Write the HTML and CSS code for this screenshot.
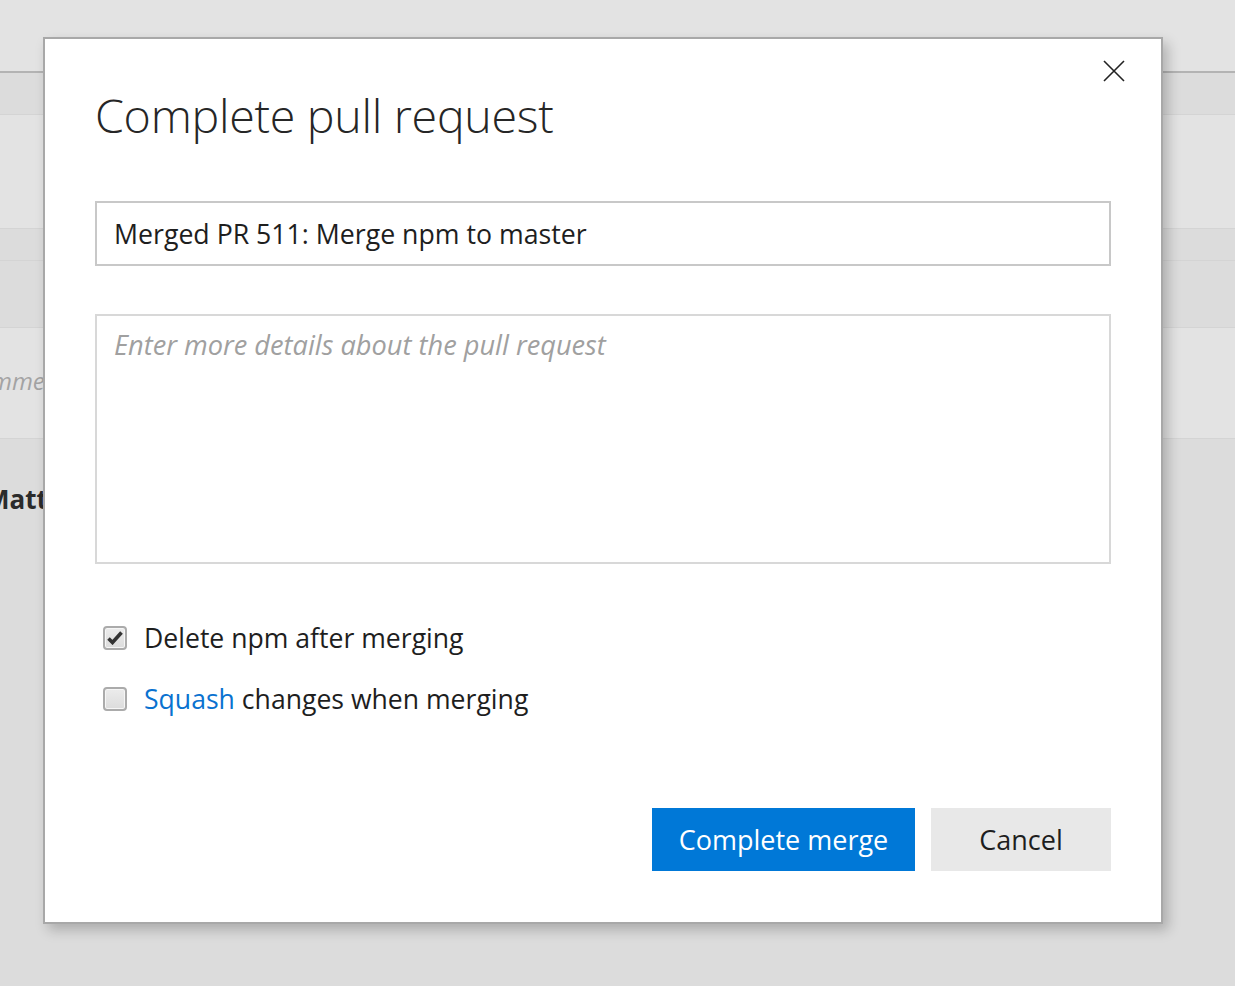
FILE: index.html
```html
<!DOCTYPE html>
<html lang="en">
<head>
<meta charset="utf-8">
<title>Complete pull request</title>
<link rel="stylesheet" href="styles.css">
</head>
<body>
<div class="page">
  <div class="bg">
    <div class="bg-top"></div>
    <div class="bg-rule"></div>
    <div class="band band-dark band-1"></div>
    <div class="band band-light band-2"></div>
    <div class="band band-dark band-3"></div>
    <div class="band band-dark band-4"></div>
    <div class="band band-light band-5"><span class="bg-placeholder">mment</span></div>
    <div class="band band-dark band-6"><span class="bg-name">Matt</span></div>
  </div>

  <div class="dialog" role="dialog" aria-labelledby="dlg-title">
    <button class="close" aria-label="Close">
      <svg width="22" height="22" viewBox="0 0 22 22"><path d="M1 1 L21 21 M21 1 L1 21" stroke="#222" stroke-width="1.6" fill="none"/></svg>
    </button>
    <h1 id="dlg-title" class="title">Complete pull request</h1>
    <div class="field">Merged PR 511: Merge npm to master</div>
    <div class="textarea"><span class="placeholder">Enter more details about the pull request</span></div>
    <div class="options">
      <label class="option">
        <span class="check checked">
          <svg width="16" height="14" viewBox="0 0 16 14"><path d="M1.5 7.5 L5.5 11.5 L14.5 1.5" stroke="#333" stroke-width="3.6" fill="none" stroke-linejoin="miter"/></svg>
        </span>
        <span class="option-text">Delete npm after merging</span>
      </label>
      <label class="option">
        <span class="check"></span>
        <span class="option-text"><span class="link">Squash</span> changes when merging</span>
      </label>
    </div>
    <div class="actions">
      <button class="btn btn-primary">Complete merge</button>
      <button class="btn btn-default">Cancel</button>
    </div>
  </div>
</div>
</body>
</html>
```

FILE: styles.css
```css
* { box-sizing: border-box; }
html, body { margin: 0; padding: 0; }
body {
  font-family: "Open Sans", "Noto Sans", "Liberation Sans", sans-serif;
  background: #e3e3e3;
}
.page {
  position: relative;
  width: 1235px;
  height: 986px;
  overflow: hidden;
  background: #dcdcdc;
}
.bg-top { height: 71px; background: #e3e3e3; }
.bg-rule { height: 2px; background: #b3b3b3; }
.band { border-bottom: 1px solid #d4d4d4; overflow: hidden; white-space: nowrap; }
.band-dark { background: #dcdcdc; }
.band-light { background: #e3e3e3; }
.band-1 { height: 42px; }
.band-2 { height: 114px; }
.band-3 { height: 32px; }
.band-4 { height: 67px; }
.band-5 { height: 111px; padding-top: 36px; }
.band-6 { border-bottom: none; height: 600px; padding-top: 42px; }
.bg-placeholder {
  display: block;
  margin-left: -9px;
  font-size: 24px;
  font-style: italic;
  color: #a3a3a3;
}
.bg-name {
  display: block;
  margin-left: -15px;
  font-size: 26px;
  font-weight: 700;
  color: #2b2b2b;
}

.dialog {
  position: absolute;
  left: 43px;
  top: 37px;
  width: 1120px;
  height: 887px;
  background: #fff;
  border: 2px solid #a8a8a8;
  box-shadow: 5px 6px 12px rgba(0,0,0,0.22);
  padding: 44px 50px 0 50px;
  display: flex;
  flex-direction: column;
}
.close {
  position: absolute;
  top: 21px;
  right: 36px;
  width: 22px;
  height: 22px;
  padding: 0;
  border: 0;
  background: none;
  line-height: 0;
}
.title {
  margin: 0;
  font-family: "Open Sans", "Noto Sans", sans-serif;
  font-weight: 300;
  font-size: 46.6px;
  line-height: 64px;
  color: #262626;
  letter-spacing: -0.3px;
}
.field {
  margin-top: 54px;
  height: 65px;
  border: 2px solid #c8c8c8;
  padding: 0 17px;
  display: flex;
  align-items: center;
  font-size: 26.7px;
  color: #1e1e1e;
}
.textarea {
  margin-top: 48px;
  height: 250px;
  border: 2px solid #d8d8d8;
  padding: 11px 17px;
  font-size: 27.2px;
  line-height: 36px;
}
.placeholder {
  font-style: italic;
  color: #a0a0a0;
}
.options {
  margin-top: 56px;
  display: flex;
  flex-direction: column;
  gap: 25px;
}
.option {
  display: flex;
  align-items: center;
  gap: 17px;
  padding-left: 8px;
  height: 36px;
  font-size: 26.6px;
  color: #1e1e1e;
}
.check {
  width: 24px;
  height: 24px;
  border: 2px solid #ababab;
  border-radius: 4px;
  background: linear-gradient(#ececec, #dcdcdc);
  box-shadow: inset 0 0 0 1px #f6f6f6;
  display: flex;
  align-items: center;
  justify-content: center;
  flex: none;
}
.link { color: #0a72d0; }
.actions {
  margin-top: 91px;
  display: flex;
  justify-content: flex-end;
  gap: 16px;
}
.btn {
  height: 63px;
  border: 0;
  font-family: "Open Sans", "Noto Sans", sans-serif;
  font-size: 27px;
  padding: 0;
}
.btn-primary {
  width: 263px;
  background: #0078d7;
  color: #fff;
}
.btn-default {
  width: 180px;
  background: #e8e8e8;
  color: #1e1e1e;
}
```
